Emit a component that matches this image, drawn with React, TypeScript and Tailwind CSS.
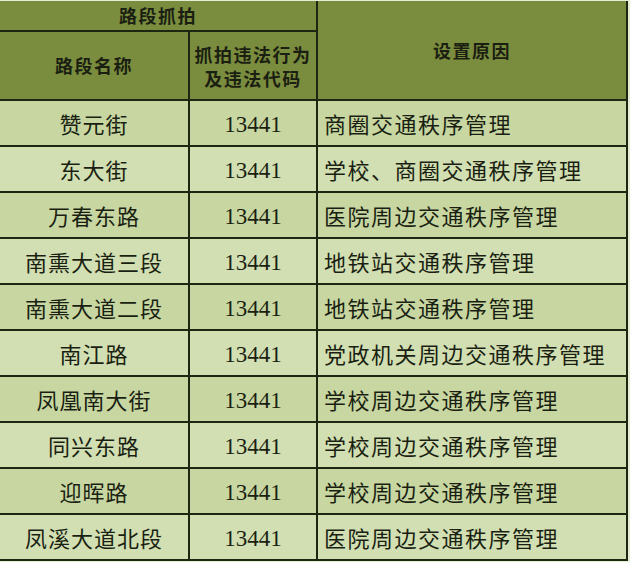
const ROWS: Array<[string, string, string]> = [
  ['赞元街', '13441', '商圈交通秩序管理'],
  ['东大街', '13441', '学校、商圈交通秩序管理'],
  ['万春东路', '13441', '医院周边交通秩序管理'],
  ['南熏大道三段', '13441', '地铁站交通秩序管理'],
  ['南熏大道二段', '13441', '地铁站交通秩序管理'],
  ['南江路', '13441', '党政机关周边交通秩序管理'],
  ['凤凰南大街', '13441', '学校周边交通秩序管理'],
  ['同兴东路', '13441', '学校周边交通秩序管理'],
  ['迎晖路', '13441', '学校周边交通秩序管理'],
  ['凤溪大道北段', '13441', '医院周边交通秩序管理'],
]

const cjk = "font-['Noto_Sans_CJK_SC','Noto_Sans',sans-serif]"
const cell = 'border-r-2 border-b-2 border-[#1c2712] flex items-center'

export default function App() {
  return (
    <div className="w-[630px] h-[562px] bg-[#e4ecd2] pt-px">
      <div className={`grid grid-cols-[190px_128px_310px] grid-rows-[31px_69px_repeat(10,46px)] text-[#1a1f12] ${cjk}`}>
        <div className={`${cell} col-span-2 justify-center bg-[#7a8c3d] font-bold text-[18px] tracking-[1.5px]`}>
          路段抓拍
        </div>
        <div className={`${cell} row-span-2 justify-center bg-[#7a8c3d] font-bold text-[18px] tracking-[1.5px]`}>
          设置原因
        </div>
        <div className={`${cell} justify-center bg-[#7a8c3d] font-bold text-[18px] tracking-[1.5px]`}>
          路段名称
        </div>
        <div className={`${cell} flex-col justify-center bg-[#7a8c3d] font-bold text-[18px] leading-[24px] tracking-[1.5px]`}>
          <span>抓拍违法行为</span>
          <span>及违法代码</span>
        </div>
        {ROWS.map(([name, code, reason], i) => {
          const bg = i % 2 === 0 ? 'bg-[#c8d7a1]' : 'bg-[#d2dfb2]'
          return [
            <div key={`n${i}`} className={`${cell} ${bg} justify-center text-[22px] tracking-[1px]`}>
              {name}
            </div>,
            <div key={`c${i}`} className={`${cell} ${bg} justify-center pt-[5px] text-[23px] font-['Liberation_Serif',serif]`}>
              {code}
            </div>,
            <div key={`r${i}`} className={`${cell} ${bg} pl-[6px] text-[22px] tracking-[1.5px] whitespace-nowrap`}>
              {reason}
            </div>,
          ]
        })}
      </div>
    </div>
  )
}
